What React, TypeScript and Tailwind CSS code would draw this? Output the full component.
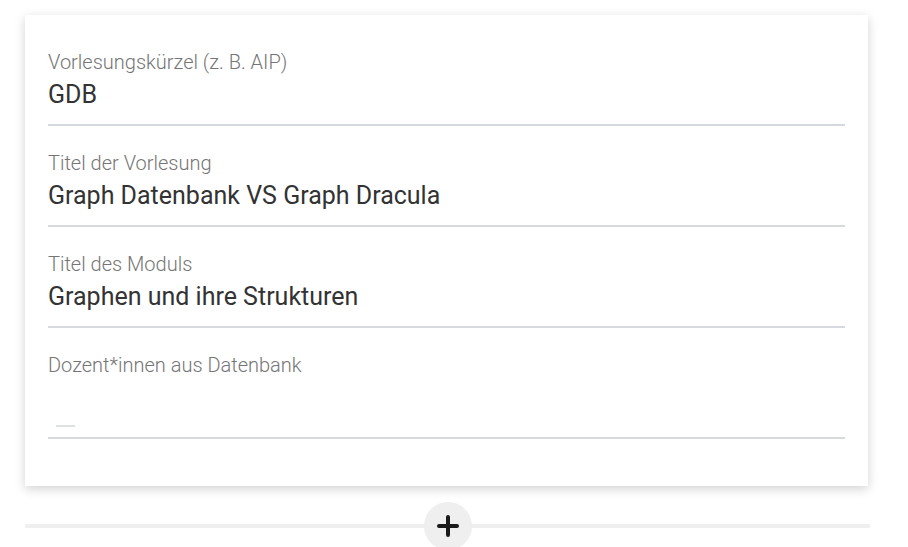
import React from "react";

function Field({ label, value }: { label: string; value?: string }) {
  return (
    <div className="flex flex-col">
      <div className="text-[20px] leading-[24px] text-[#757575] font-light">{label}</div>
      {value ? (
        <>
          <div className="mt-[6px] h-[30px] text-[25px] leading-[30px] text-[#333333]">{value}</div>
          <div className="mt-[14px] h-[2px] bg-[#d6dadf]" />
        </>
      ) : (
        <>
          <div className="mt-[6px] h-[44px] flex items-end pl-[8px]">
            <div className="w-[19px] h-[2px] bg-[#dde0e4]" />
          </div>
          <div className="mt-[10px] h-[2px] bg-[#d6dadf]" />
        </>
      )}
    </div>
  );
}

export default function App() {
  return (
    <div className="w-[908px] h-[547px] bg-white overflow-hidden" style={{ fontFamily: "Roboto, 'Noto Sans', sans-serif" }}>
      <div className="ml-[25px] mt-[15px] w-[843px] h-[471px] bg-white shadow-[0_3px_10px_rgba(0,0,0,0.18)] px-[23px] pt-[35px] flex flex-col gap-[25px]">
        <Field label="Vorlesungskürzel (z. B. AIP)" value="GDB" />
        <Field label="Titel der Vorlesung" value="Graph Datenbank VS Graph Dracula" />
        <Field label="Titel des Moduls" value="Graphen und ihre Strukturen" />
        <Field label="Dozent*innen aus Datenbank" />
      </div>
      <div className="relative ml-[25px] mt-[16px] w-[845px] h-[48px] flex items-center justify-center">
        <div className="absolute left-0 right-0 top-[22px] h-[4px] bg-[#efefef]" />
        <div className="relative w-[48px] h-[48px] rounded-full bg-[#efefef] flex items-center justify-center">
          <svg width="22" height="22" viewBox="0 0 22 22">
            <path d="M11 2v18M2 11h18" stroke="#1a1a1a" strokeWidth="4" strokeLinecap="round" />
          </svg>
        </div>
      </div>
    </div>
  );
}
